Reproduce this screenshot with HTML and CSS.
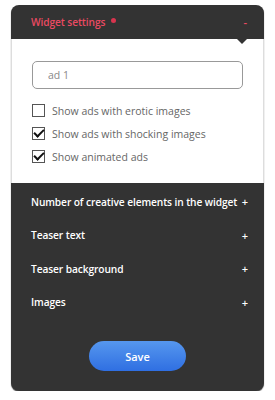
FILE: index.html
```html
<!DOCTYPE html>
<html lang="en">
<head>
    <meta charset="UTF-8">
    <meta name="viewport" content="width=device-width, initial-scale=1.0">
    <title>Widget settings</title>
    <link rel="stylesheet" href="styles.css">
</head>
<body>
    <div class="panel">
        <div class="panel-header">
            <span class="title">Widget settings</span>
            <span class="dot"></span>
            <span class="toggle">-</span>
        </div>
        <div class="panel-body">
            <input type="text" class="name-input" placeholder="ad 1">
            <label class="check"><span class="box"></span>Show ads with erotic images</label>
            <label class="check"><span class="box checked"></span>Show ads with shocking images</label>
            <label class="check"><span class="box checked"></span>Show animated ads</label>
        </div>
        <div class="panel-sections">
            <div class="section"><span>Number of creative elements in the widget</span><span class="plus">+</span></div>
            <div class="section"><span>Teaser text</span><span class="plus">+</span></div>
            <div class="section"><span>Teaser background</span><span class="plus">+</span></div>
            <div class="section"><span>Images</span><span class="plus">+</span></div>
            <div class="actions">
                <button type="button" class="save">Save</button>
            </div>
        </div>
    </div>
</body>
</html>
```

FILE: styles.css
```css
body {
    margin: 0;
    background-color: #fff;
    font-family: "Open Sans", Arial, sans-serif;
}
.panel {
    width: 253px;
    margin: 5px 0 0 11px;
    border-radius: 8px;
    background-color: #333;
    box-shadow: 0 1px 1px rgba(0,0,0,0.6);
}
.panel-header {
    position: relative;
    display: flex;
    align-items: center;
    height: 34px;
    padding: 0 17px 0 20px;
    color: #ea4a62;
    font-size: 10.2px;
    font-weight: 600;
    letter-spacing: -0.1px;
    border-radius: 8px 8px 0 0;
}
.panel-header::after {
    content: "";
    position: absolute;
    right: 17px;
    bottom: -5px;
    border-left: 5px solid transparent;
    border-right: 5px solid transparent;
    border-top: 5px solid #333;
}
.dot {
    width: 5px;
    height: 5px;
    margin: -3px 0 0 6px;
    border-radius: 50%;
    background-color: #d8344e;
}
.toggle {
    margin-left: auto;
    font-size: 11px;
}
.panel-body {
    background-color: #fff;
    border-left: 1px solid #ddd;
    border-right: 1px solid #ddd;
    padding: 22px 20px 15px 20px;
}
.name-input {
    display: block;
    box-sizing: border-box;
    width: 211px;
    height: 28px;
    margin-bottom: 10px;
    padding: 0 15px;
    border: 1px solid #999;
    border-radius: 5px;
    font-family: "Open Sans", Arial, sans-serif;
    font-size: 10.5px;
    color: #555;
}
.name-input::placeholder { color: #888; }
.check {
    display: flex;
    align-items: center;
    height: 23px;
    color: #666;
    font-size: 10.5px;
    white-space: nowrap;
}
.box {
    position: relative;
    box-sizing: border-box;
    width: 13px;
    height: 13px;
    margin-right: 7px;
    border: 1px solid #555;
}
.box.checked::after {
    content: "";
    position: absolute;
    left: 3px;
    top: -1px;
    width: 4px;
    height: 8px;
    border-right: 2px solid #111;
    border-bottom: 2px solid #111;
    transform: rotate(45deg);
}
.panel-sections {
    padding: 2px 0 20px 0;
    color: #fff;
    font-size: 10.2px;
    font-weight: 600;
    letter-spacing: -0.1px;
}
.section {
    display: flex;
    align-items: center;
    justify-content: space-between;
    height: 33.5px;
    padding: 0 16px 0 20px;
    white-space: nowrap;
}
.plus { font-size: 11px; }
.actions {
    display: flex;
    justify-content: center;
    margin-top: 22px;
}
.save {
    width: 97px;
    height: 30px;
    border: none;
    border-radius: 15px;
    background: linear-gradient(#5697ee, #2f6fe2);
    color: #fff;
    font-family: "Open Sans", Arial, sans-serif;
    font-size: 11px;
    font-weight: 600;
    cursor: pointer;
}
```
